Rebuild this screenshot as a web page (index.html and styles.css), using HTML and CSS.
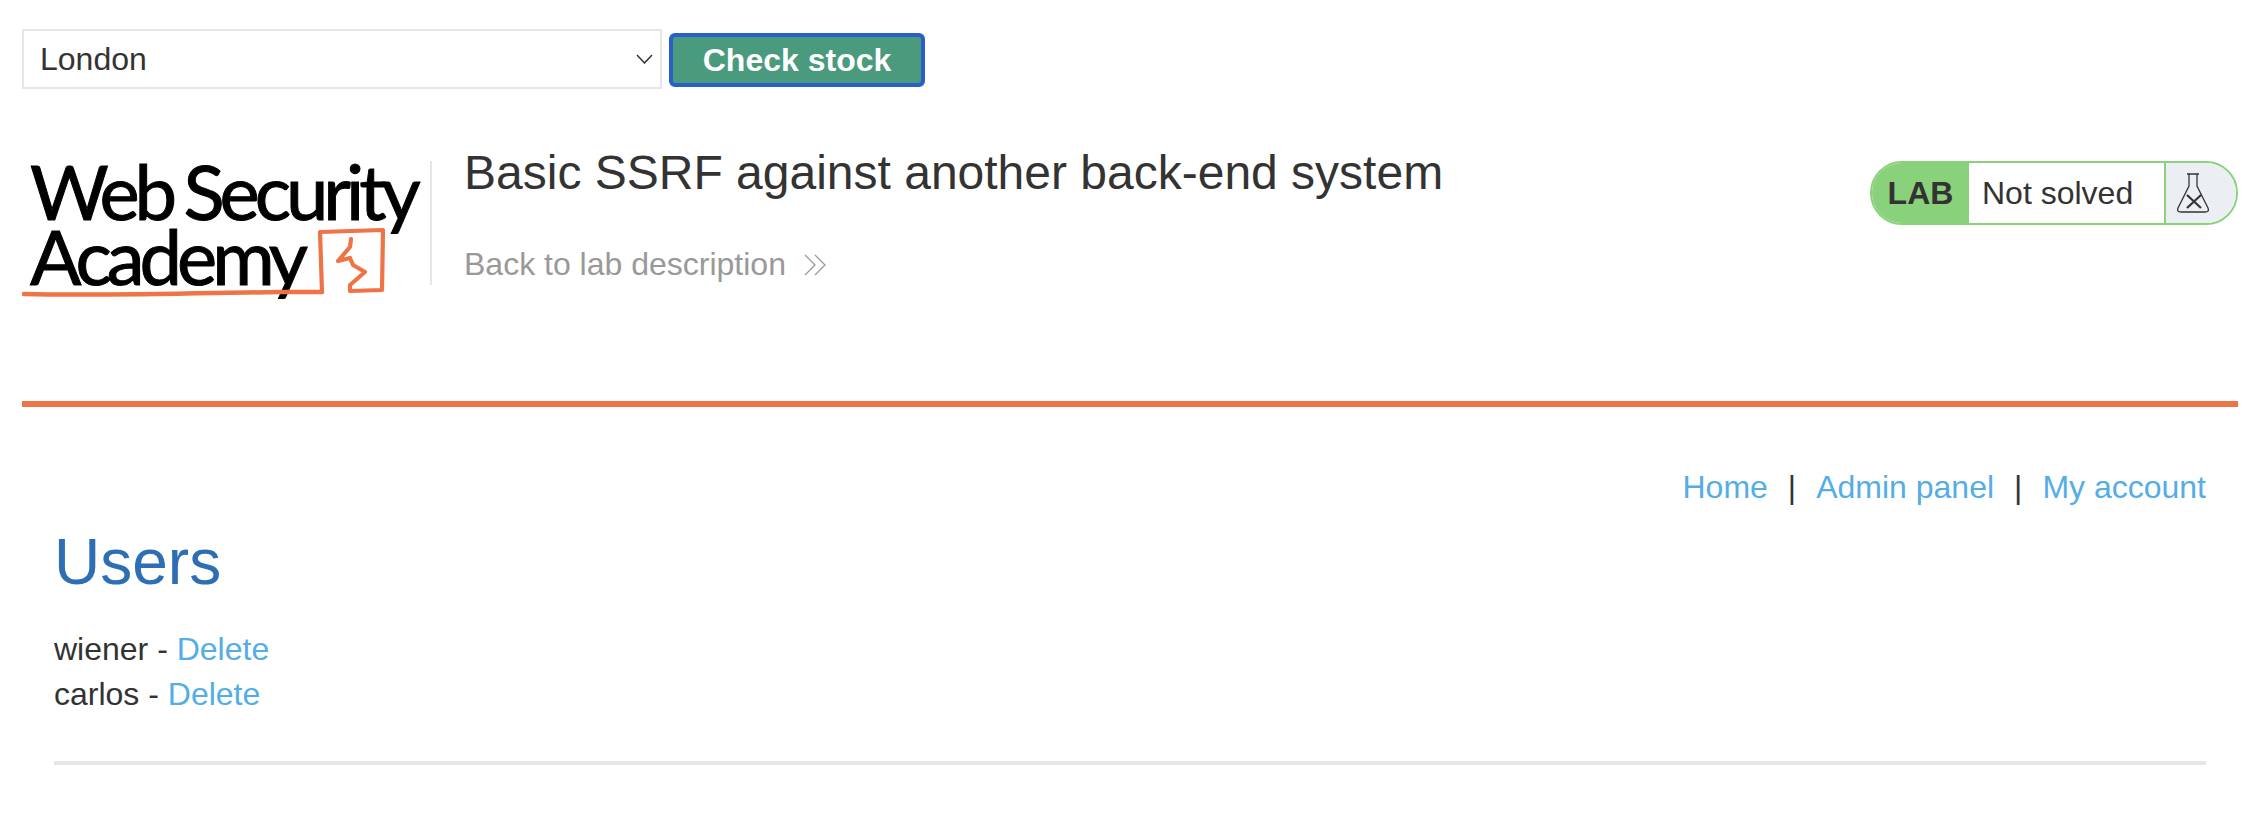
FILE: index.html
```html
<!DOCTYPE html>
<html lang="en">
<head>
  <meta charset="UTF-8">
  <title>Basic SSRF against another back-end system</title>
  <link rel="stylesheet" href="styles.css">
</head>
<body>
  <!-- Stock check form -->
  <form class="stock-form">
    <div class="select-wrap">
      <select class="stock-select">
        <option>London</option>
        <option>Paris</option>
        <option>Milan</option>
      </select>
      <svg class="select-arrow" width="17" height="10" viewBox="0 0 17 10"><path d="M1 1l7.500 8 7.500-8" fill="none" stroke="#333" stroke-width="1.5"/></svg>
    </div>
    <button class="stock-button" type="button">Check stock</button>
  </form>

  <!-- Lab header -->
  <header class="lab-header">
    <div class="logo">
      <div class="logo-text">Web Security</div>
      <div class="logo-text">Academy</div>
      <svg class="logo-marks" width="408" height="150" viewBox="0 0 408 150">
        <path d="M2 133C80 135 180 132 258 131L300 131" fill="none" stroke="#ee7347" stroke-width="4.500" stroke-linecap="round"/>
        <path d="M300 131L298 71L361 69L360 129L328 130L328 124L343 111L331 104L328 97L316 100L328 86L329 78" fill="none" stroke="#ee7347" stroke-width="4.200" stroke-linejoin="round" stroke-linecap="round"/>
      </svg>
    </div>
    <div class="lab-title">
      <h2>Basic SSRF against another back-end system</h2>
      <a class="back-link" href="#">Back to lab description
        <svg width="22" height="22" viewBox="0 0 22 22"><path d="M1 1l10 10L1 21M11 1l10 10-10 10" fill="none" stroke="#999" stroke-width="1.300"/></svg>
      </a>
    </div>
    <div class="lab-status">
      <span class="lab-tag">LAB</span>
      <span class="lab-state">Not solved</span>
      <span class="lab-icon">
        <svg width="32" height="40" viewBox="0 0 32 40"><path d="M10 1h12M12 1v12L1 35c-1 3 0 4 3 4h24c3 0 4-1 3-4L20 13V1" fill="none" stroke="#333" stroke-width="1.300"/><path d="M10 22l14 13M24 22L10 35" fill="none" stroke="#333" stroke-width="2.200"/></svg>
      </span>
    </div>
  </header>

  <hr class="orange-rule">

  <section class="content">
    <nav class="top-links">
      <a href="#">Home</a><span class="sep">|</span><a href="#">Admin panel</a><span class="sep">|</span><a href="#">My account</a>
    </nav>
    <h1>Users</h1>
    <div class="user-row">wiener - <a href="#">Delete</a></div>
    <div class="user-row">carlos - <a href="#">Delete</a></div>
    <hr class="grey-rule">
  </section>
</body>
</html>
```

FILE: styles.css
```css
body {
  font-family: "Liberation Sans", Arial, sans-serif;
  font-size: 32px;
  color: #333;
  margin: 0;
  padding: 0 22px;
  background-color: #fff;
}
a {
  color: #54ade5;
  text-decoration: none;
}
.stock-form {
  display: flex;
  align-items: center;
  gap: 7px;
  padding-top: 29px;
}
.select-wrap {
  position: relative;
}
.stock-select {
  display: block;
  width: 640px;
  height: 60px;
  padding: 0 16px;
  font: inherit;
  color: #333;
  background: #fff;
  border: 2px solid #e6e6e6;
  border-radius: 0;
  appearance: none;
}
.select-arrow {
  position: absolute;
  right: 9px;
  top: 25px;
}
.stock-button {
  width: 256px;
  height: 54px;
  margin-top: 2px;
  font: bold 32px "Liberation Sans", Arial, sans-serif;
  color: #fff;
  background-color: #4a9a7e;
  border: 4px solid #2a5ec9;
  border-radius: 6px;
  padding: 0;
}
.lab-header {
  display: flex;
  align-items: flex-start;
  padding-top: 72px;
  height: 240px;
}
.logo {
  position: relative;
  width: 408px;
  height: 124px;
  border-right: 2px solid #e6e6e6;
  flex-shrink: 0;
}
.logo-text {
  font-family: "Lato", sans-serif;
  font-size: 76px;
  line-height: 65px;
  color: #000;
  letter-spacing: -5px;
  word-spacing: -3px;
  -webkit-text-stroke: 1px #000;
  padding-left: 8px;
  margin-top: -3px;
  white-space: nowrap;
}
.logo-text + .logo-text {
  margin-top: 0;
}
.logo-marks {
  position: absolute;
  left: 0;
  top: 0;
}
.lab-title {
  flex: 1;
  padding-left: 32px;
}
.lab-title h2 {
  font-size: 48px;
  font-weight: normal;
  line-height: 52px;
  margin: -14px 0 47px;
}
.back-link {
  display: flex;
  align-items: center;
  gap: 18px;
  color: #999;
}
.lab-status {
  display: flex;
  box-sizing: border-box;
  width: 368px;
  height: 64px;
  border: 2px solid #89d17a;
  border-radius: 32px;
  overflow: hidden;
  flex-shrink: 0;
}
.lab-tag {
  width: 97px;
  font-weight: bold;
  background-color: #89d17a;
  display: flex;
  align-items: center;
  justify-content: center;
}
.lab-state {
  flex: 1;
  display: flex;
  align-items: center;
  padding-left: 13px;
  color: #333;
}
.lab-icon {
  box-sizing: border-box;
  width: 72px;
  background-color: #ebeff3;
  border-left: 2px solid #89d17a;
  display: flex;
  align-items: center;
  padding-left: 11px;
}
.orange-rule {
  height: 6px;
  margin: 0;
  border: 0;
  background-color: #ee7347;
}
.content {
  padding: 0 32px;
}
.top-links {
  display: flex;
  justify-content: flex-end;
  padding-top: 62px;
  line-height: 37px;
}
.sep {
  margin: 0 20px;
  color: #333;
}
.content h1 {
  font-size: 64px;
  font-weight: normal;
  color: #2d6eb5;
  line-height: 74px;
  margin: 19px 0 28px;
}
.user-row {
  line-height: 45px;
}
.grey-rule {
  height: 4px;
  margin: 44px 0 0;
  border: 0;
  background-color: #e6e6e6;
}
```
